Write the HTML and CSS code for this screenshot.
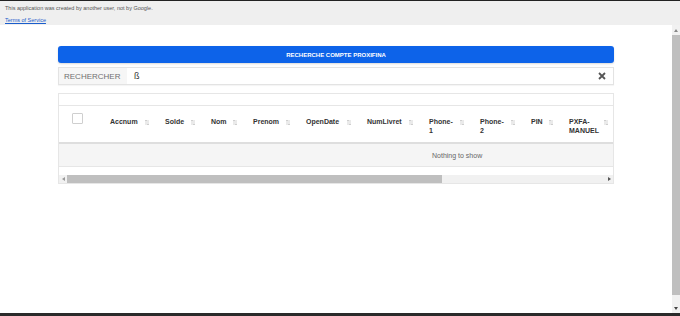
FILE: index.html
```html
<!DOCTYPE html>
<html lang="fr">
<head>
	<meta charset="UTF-8">
	<title>Recherche compte Proxifina</title>
	<link rel="stylesheet" href="styles.css">
</head>
<body>
<div class="notice">
	<p>This application was created by another user, not by Google.</p>
	<a href="#">Terms of Service</a>
</div>

<div class="frame">
	<div class="frame-body">
		<div class="page">
			<button class="btn-title">RECHERCHE COMPTE PROXIFINA</button>

			<div class="search">
				<span class="search-label">RECHERCHER</span>
				<span class="search-input">ß</span>
				<span class="search-clear">
					<svg width="8" height="8" viewBox="0 0 8 8"><path d="M1 1L7 7M7 1L1 7" stroke="#555" stroke-width="1.8"/></svg>
				</span>
			</div>

			<div class="grid">
				<div class="toolbar"></div>
				<div class="scroll">
					<table>
						<colgroup>
							<col style="width:43px">
							<col style="width:55px">
							<col style="width:46px">
							<col style="width:42px">
							<col style="width:53px">
							<col style="width:61px">
							<col style="width:62px">
							<col style="width:51px">
							<col style="width:51px">
							<col style="width:38px">
							<col style="width:55px">
							<col style="width:241px">
						</colgroup>
						<thead>
							<tr>
								<th class="cb-cell"><span class="cb"></span></th>
								<th><div class="th"><span class="lbl">Accnum</span><i class="sort"></i></div></th>
								<th><div class="th"><span class="lbl">Solde</span><i class="sort"></i></div></th>
								<th><div class="th"><span class="lbl">Nom</span><i class="sort"></i></div></th>
								<th><div class="th"><span class="lbl">Prenom</span><i class="sort"></i></div></th>
								<th><div class="th"><span class="lbl">OpenDate</span><i class="sort"></i></div></th>
								<th><div class="th"><span class="lbl">NumLivret</span><i class="sort"></i></div></th>
								<th><div class="th"><span class="lbl">Phone-1</span><i class="sort"></i></div></th>
								<th><div class="th"><span class="lbl">Phone-2</span><i class="sort"></i></div></th>
								<th><div class="th"><span class="lbl">PIN</span><i class="sort"></i></div></th>
								<th><div class="th"><span class="lbl">PXFA-MANUEL</span><i class="sort"></i></div></th>
								<th></th>
							</tr>
						</thead>
						<tbody>
							<tr class="empty">
								<td colspan="12"><span class="empty-msg">Nothing to show</span></td>
							</tr>
						</tbody>
					</table>
				</div>
				<div class="hbar">
					<span class="arrow"><svg width="3" height="4" viewBox="0 0 3 4"><path d="M3 0L0 2L3 4Z" fill="#999"/></svg></span>
					<div class="hbar-track"><div class="hbar-thumb"></div></div>
					<span class="arrow"><svg width="3" height="4" viewBox="0 0 3 4"><path d="M0 0L3 2L0 4Z" fill="#555"/></svg></span>
				</div>
			</div>
		</div>
	</div>
	<div class="vbar">
		<span class="arrow"><svg width="4" height="3" viewBox="0 0 4 3"><path d="M0 3L2 0L4 3Z" fill="#888"/></svg></span>
		<div class="vbar-thumb"></div>
		<span class="vbar-space"></span>
		<span class="arrow"><svg width="4" height="3" viewBox="0 0 4 3"><path d="M0 0L2 3L4 0Z" fill="#444"/></svg></span>
	</div>
</div>
<div class="bottom-line"></div>
</body>
</html>
```

FILE: styles.css
```css
html,body{
	padding: 0;
	margin: 0;
	background-color: #fff;
	font-family: "Liberation Sans", Arial, sans-serif;
}
.notice{
	height: 25px;
	border-top: 1px solid #222;
	background-color: #efefef;
	padding: 4px 0 0 5px;
	box-sizing: border-box;
	font-size: 5.5px;
	line-height: 7px;
}
.notice p{
	margin: 0;
	color: #555;
}
.notice a{
	display: block;
	width: max-content;
	margin-top: 5px;
	color: #1a5dcc;
}

/* zone de l'appli + barre verticale */
.frame{
	display: flex;
	height: 288px;
}
.frame-body{
	flex: 1;
	overflow: hidden;
}
.vbar{
	display: flex;
	flex-direction: column;
	width: 8px;
	background-color: #f1f1f1;
}
.vbar .arrow{
	height: 10px;
}
.vbar-thumb{
	height: 260px;
	background-color: #bfbfbf;
}
.vbar-space{
	flex: 1;
}
.arrow{
	display: flex;
	align-items: center;
	justify-content: center;
	flex: none;
}

.page{
	width: 556px;
	margin: 0 auto;
	padding-top: 21px;
}
.btn-title{
	display: block;
	width: 100%;
	height: 17px;
	padding: 0;
	border: none;
	border-radius: 3px;
	background-color: #0d63e9;
	box-shadow: 0 1px 2px rgba(0,0,0,.15);
	color: #fff;
	font-family: inherit;
	font-weight: bold;
	font-size: 6px;
}
.search{
	display: flex;
	align-items: center;
	height: 18px;
	margin-top: 4px;
	border: 1px solid #e3e3e3;
	box-sizing: border-box;
	box-shadow: 0 1px 1px rgba(0,0,0,.04);
}
.search-label{
	align-self: stretch;
	display: flex;
	align-items: center;
	width: 68px;
	padding-left: 5px;
	box-sizing: border-box;
	background-color: #f6f6f6;
	color: #707070;
	font-size: 8px;
}
.search-input{
	flex: 1;
	padding-left: 7px;
	color: #333;
	font-size: 9px;
}
.search-clear{
	display: flex;
	padding-right: 7px;
}

.grid{
	margin-top: 8px;
	border: 1px solid #e6e6e6;
}
.toolbar{
	height: 11px;
	border-bottom: 1px solid #e6e6e6;
}
.scroll{
	overflow: hidden;
	padding-bottom: 8px;
}
table{
	width: 798px;
	table-layout: fixed;
	border-collapse: collapse;
}
th{
	padding: 11px 8px 7px 8px;
	border-bottom: 2px solid #dedede;
	vertical-align: top;
	text-align: left;
	color: #333;
	font-size: 7px;
	line-height: 9px;
	font-weight: bold;
}
th.cb-cell{
	padding: 7px 0 0 13px;
}
.cb{
	display: block;
	width: 9px;
	height: 9px;
	border: 1px solid #cfcfcf;
	border-radius: 1px;
	background-color: #fff;
}
.th{
	display: flex;
	align-items: flex-start;
	gap: 4px;
}
.lbl{
	flex: 0 1 auto;
	min-width: 0;
	margin-right: auto;
}
.sort{
	flex: none;
	width: 4px;
	height: 5px;
	margin-top: 3px;
	background: url("data:image/svg+xml;utf8,<svg xmlns='http://www.w3.org/2000/svg' width='4' height='5'><path d='M1 0V5M0 1L1 0L2 1M3 0V5M2 4L3 5L4 4' stroke='%23bbb' stroke-width='0.6' fill='none'/></svg>") no-repeat;
}
.empty td{
	height: 22px;
	padding: 0;
	background-color: #f5f5f5;
	border-bottom: 1px solid #e6e6e6;
	color: #666;
	font-size: 7px;
}
.empty-msg{
	display: block;
	width: 554px;
	padding-left: 373px;
}

.hbar{
	display: flex;
	height: 8px;
	background-color: #f1f1f1;
}
.hbar .arrow{
	width: 8px;
}
.hbar-track{
	flex: 1;
}
.hbar-thumb{
	width: 375px;
	height: 100%;
	background-color: #bfbfbf;
}
.bottom-line{
	height: 3px;
	background-color: #2a2a2a;
}
```
